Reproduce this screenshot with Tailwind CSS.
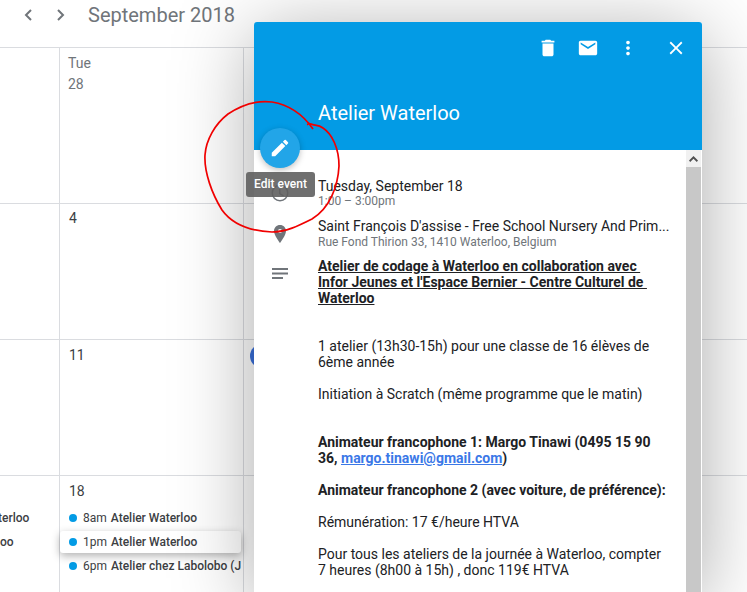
<!doctype html>
<html lang="en">

<head>
  <meta charset="UTF-8" />
  <title>September 2018</title>
  <script src="https://cdn.jsdelivr.net/npm/@tailwindcss/browser@4"></script>
</head>

<body class="relative w-[747px] h-[592px] overflow-hidden bg-white font-['Roboto',sans-serif] text-[#3c4043]">

  <!-- Top bar -->
  <header class="h-[48px] flex items-start border-b border-[#dadce0]">
    <div class="flex items-center pl-[18px] pt-[3px] h-[26px]">
      <svg class="w-[20px] h-[24px]" viewBox="0 0 20 24" fill="none" stroke="#70757a" stroke-width="2">
        <path d="M13 7l-5 5 5 5" />
      </svg>
      <svg class="w-[20px] h-[24px] ml-[13px]" viewBox="0 0 20 24" fill="none" stroke="#70757a" stroke-width="2">
        <path d="M7 7l5 5-5 5" />
      </svg>
      <h1 class="ml-[17px] text-[20px] leading-[24px] text-[#70757a] whitespace-nowrap">September 2018</h1>
    </div>
  </header>

  <!-- Month grid -->
  <div class="grid grid-cols-[60px_184px_1fr] grid-rows-[156px_136px_136px_1fr] h-[544px]">
    <div class="border-r border-b border-[#dadce0]"></div>
    <div class="border-r border-b border-[#dadce0] pl-[8px] pt-[5px] text-[14px] leading-[21px] text-[#70757a]">
      <p>Tue</p>
      <p>28</p>
    </div>
    <div class="border-b border-[#dadce0]"></div>

    <div class="border-r border-b border-[#dadce0]"></div>
    <div class="border-r border-b border-[#dadce0] pl-[9px] pt-[4px] text-[14px] leading-[21px]">4</div>
    <div class="border-b border-[#dadce0]"></div>

    <div class="border-r border-b border-[#dadce0]"></div>
    <div class="border-r border-b border-[#dadce0] pl-[9px] pt-[5px] text-[14px] leading-[21px]">11</div>
    <div class="border-b border-[#dadce0] pl-[6px] pt-[4px]">
      <div class="w-[24px] h-[24px] rounded-full bg-[#3a70dc]"></div>
    </div>

    <div class="border-r border-[#dadce0] pt-[30px] text-[12px] leading-[24px] font-medium whitespace-nowrap">
      <p class="-ml-[2px]">terloo</p>
      <p>oo</p>
    </div>
    <div class="border-r border-[#dadce0] text-[12px] leading-[24px]">
      <p class="pl-[9px] pt-[5px] text-[14px] leading-[21px]">18</p>
      <div class="mt-[4px] flex items-center pl-[9px] whitespace-nowrap">
        <span class="w-[8px] h-[8px] rounded-full bg-[#039be5]"></span>
        <span class="ml-[6px]">8am</span><span class="ml-[4px] font-medium">Atelier Waterloo</span>
      </div>
      <div class="relative mt-[1px] w-[181px] h-[22px] flex items-center pl-[9px] whitespace-nowrap bg-white rounded-[3px] shadow-[0_3px_8px_rgba(0,0,0,0.3)]">
        <span class="w-[8px] h-[8px] rounded-full bg-[#039be5]"></span>
        <span class="ml-[6px]">1pm</span><span class="ml-[4px] font-medium">Atelier Waterloo</span>
      </div>
      <div class="mt-[1px] flex items-center pl-[9px] whitespace-nowrap overflow-hidden w-[181px]">
        <span class="w-[8px] h-[8px] shrink-0 rounded-full bg-[#039be5]"></span>
        <span class="ml-[6px]">6pm</span><span class="ml-[4px] font-medium">Atelier chez Labolobo (J</span>
      </div>
    </div>
    <div></div>
  </div>

  <!-- Event popup -->
  <section class="absolute left-[254px] top-[22px] w-[448px] h-[570px] rounded-t-[3px] bg-white shadow-[0_12px_80px_rgba(0,0,0,0.34)]">
    <div class="h-[128px] bg-[#039be5] relative rounded-t-[3px]">
      <div class="absolute left-[283px] top-[15px] flex items-center">
        <svg class="w-[22px] h-[22px]" viewBox="0 0 24 24" fill="#fff">
          <path d="M6 19c0 1.100.9 2 2 2h8c1.100 0 2-.9 2-2V7H6v12zM19 4h-3.500l-1-1h-5l-1 1H5v2h14V4z" />
        </svg>
        <svg class="w-[22px] h-[22px] ml-[18px]" viewBox="0 0 24 24" fill="#fff">
          <path d="M20 4H4c-1.100 0-2 .9-2 2v12c0 1.100.9 2 2 2h16c1.100 0 2-.9 2-2V6c0-1.100-.9-2-2-2zm0 4l-8 5-8-5V6l8 5 8-5v2z" />
        </svg>
        <svg class="w-[22px] h-[22px] ml-[18px]" viewBox="0 0 24 24" fill="#fff">
          <path d="M12 8c1.100 0 2-.9 2-2s-.9-2-2-2-2 .9-2 2 .9 2 2 2zm0 2c-1.100 0-2 .9-2 2s.9 2 2 2 2-.9 2-2-.9-2-2-2zm0 6c-1.100 0-2 .9-2 2s.9 2 2 2 2-.9 2-2-.9-2-2-2z" />
        </svg>
        <svg class="w-[22px] h-[22px] ml-[26px]" viewBox="0 0 24 24" fill="#fff">
          <path d="M19 6.410L17.590 5 12 10.590 6.410 5 5 6.410 10.590 12 5 17.590 6.410 19 12 13.410 17.590 19 19 17.590 13.410 12z" />
        </svg>
      </div>
      <h2 class="absolute left-[64px] top-[77px] text-[20px] leading-[28px] text-white">Atelier Waterloo</h2>
    </div>

    <div class="relative h-[442px] overflow-hidden">
      <!-- Scrollbar -->
      <div class="absolute right-px top-0 bottom-0 w-[15px] bg-[#c8c8c8]">
        <div class="h-[17px] bg-[#f1f1f1] flex items-center justify-center">
          <svg class="w-[9px] h-[6px]" viewBox="0 0 9 6" fill="#505050"><path d="M4.500 0L9 4.500 7.800 6 4.500 2.700 1.200 6 0 4.500z" /></svg>
        </div>
      </div>

      <div class="pl-[64px] pr-[32px] pt-[28px] text-[14px] leading-[16px] text-[#202124]">
        <!-- When -->
        <div class="relative">
          <svg class="absolute -left-[50px] top-[3px] w-[24px] h-[24px]" viewBox="0 0 24 24" fill="#70757a">
            <path d="M12 3.500a8.500 8.500 0 1 0 0 17 8.500 8.500 0 0 0 0-17zm0 15.500a7 7 0 1 1 0-14 7 7 0 0 1 0 14zm.500-11H11v5l4.200 2.500.700-1.200-3.400-2z" />
          </svg>
          <p class="leading-[16px]">Tuesday, September 18</p>
          <p class="text-[12px] leading-[14px] text-[#70757a]">1:00 – 3:00pm</p>
        </div>
        <!-- Where -->
        <div class="relative mt-[9px]">
          <svg class="absolute -left-[50px] top-[5px] w-[24px] h-[24px]" viewBox="0 0 24 24" fill="#70757a">
            <path d="M12 3C8.500 3 6 5.700 6 9c0 4.200 6 12 6 12s6-7.800 6-12c0-3.300-2.500-6-6-6zm0 8a2 2 0 1 1 0-4 2 2 0 0 1 0 4z" />
          </svg>
          <p class="whitespace-nowrap overflow-hidden w-[352px] leading-[18px]">Saint François D'assise - Free School Nursery And Prim...</p>
          <p class="text-[12px] leading-[14px] text-[#70757a] whitespace-nowrap">Rue Fond Thirion 33, 1410 Waterloo, Belgium</p>
        </div>
        <!-- Description -->
        <div class="relative mt-[9px] w-[350px] leading-[16px] text-[14px]">
          <svg class="absolute -left-[50px] top-[4px] w-[24px] h-[24px]" viewBox="0 0 24 24" fill="#70757a">
            <path d="M4 6h16v2H4zM4 10.500h16v2H4zM4 15h11v2H4z" />
          </svg>
          <p class="font-bold underline">Atelier de codage à Waterloo en collaboration avec&nbsp; Infor Jeunes et l'Espace Bernier - Centre Culturel de&nbsp; Waterloo</p>
          <p class="mt-[32px]">1 atelier (13h30-15h) pour une classe de 16 élèves de 6ème année</p>
          <p class="mt-[16px]">Initiation à Scratch (même programme que le matin)</p>
          <p class="mt-[32px] font-bold">Animateur francophone 1: Margo Tinawi (0495 15 90 36, <a class="text-[#3b78e7] underline">margo.tinawi@gmail.com</a>)</p>
          <p class="mt-[16px] font-bold">Animateur francophone 2 (avec voiture, de préférence):</p>
          <p class="mt-[16px]">Rémunération: 17 €/heure HTVA</p>
          <p class="mt-[16px]">Pour tous les ateliers de la journée à Waterloo, compter 7 heures (8h00 à 15h) , donc 119€ HTVA</p>
        </div>
      </div>
    </div>

    <!-- Edit button + tooltip -->
    <button class="absolute left-[6px] top-[106px] w-[40px] h-[40px] rounded-full bg-[#22a5e8] flex items-center justify-center shadow-[0_2px_6px_rgba(0,0,0,0.25)]">
      <svg class="w-[22px] h-[22px]" viewBox="0 0 24 24" fill="#fff">
        <path d="M3 17.250V21h3.750L17.810 9.940l-3.750-3.750L3 17.250zM20.710 7.040a1 1 0 0 0 0-1.410l-2.340-2.340a1 1 0 0 0-1.410 0l-1.830 1.830 3.750 3.750 1.830-1.830z" />
      </svg>
    </button>
    <div class="absolute -left-[8px] top-[150px] w-[69px] h-[25px] rounded-[3px] bg-[#5f5f5f]/90 text-white text-[12px] leading-[25px] font-medium text-center whitespace-nowrap">Edit event</div>
  </section>

  <!-- Red hand-drawn annotation -->
  <svg class="absolute left-0 top-0 w-[747px] h-[592px] pointer-events-none" viewBox="0 0 747 592" fill="none" stroke="#f00000" stroke-width="1.700">
    <path d="M313 129C304 116 290 105 272 102C256 100 240 106 228 114C215 124 206 140 205 155C204 172 212 194 222 210C232 224 250 231 272 232C286 232 298 226 312 219C330 208 338 186 339 166C339 148 332 134 323 128C318 124 314 126 311 124C309 123 307 124 308 125" />
  </svg>

</body>

</html>
